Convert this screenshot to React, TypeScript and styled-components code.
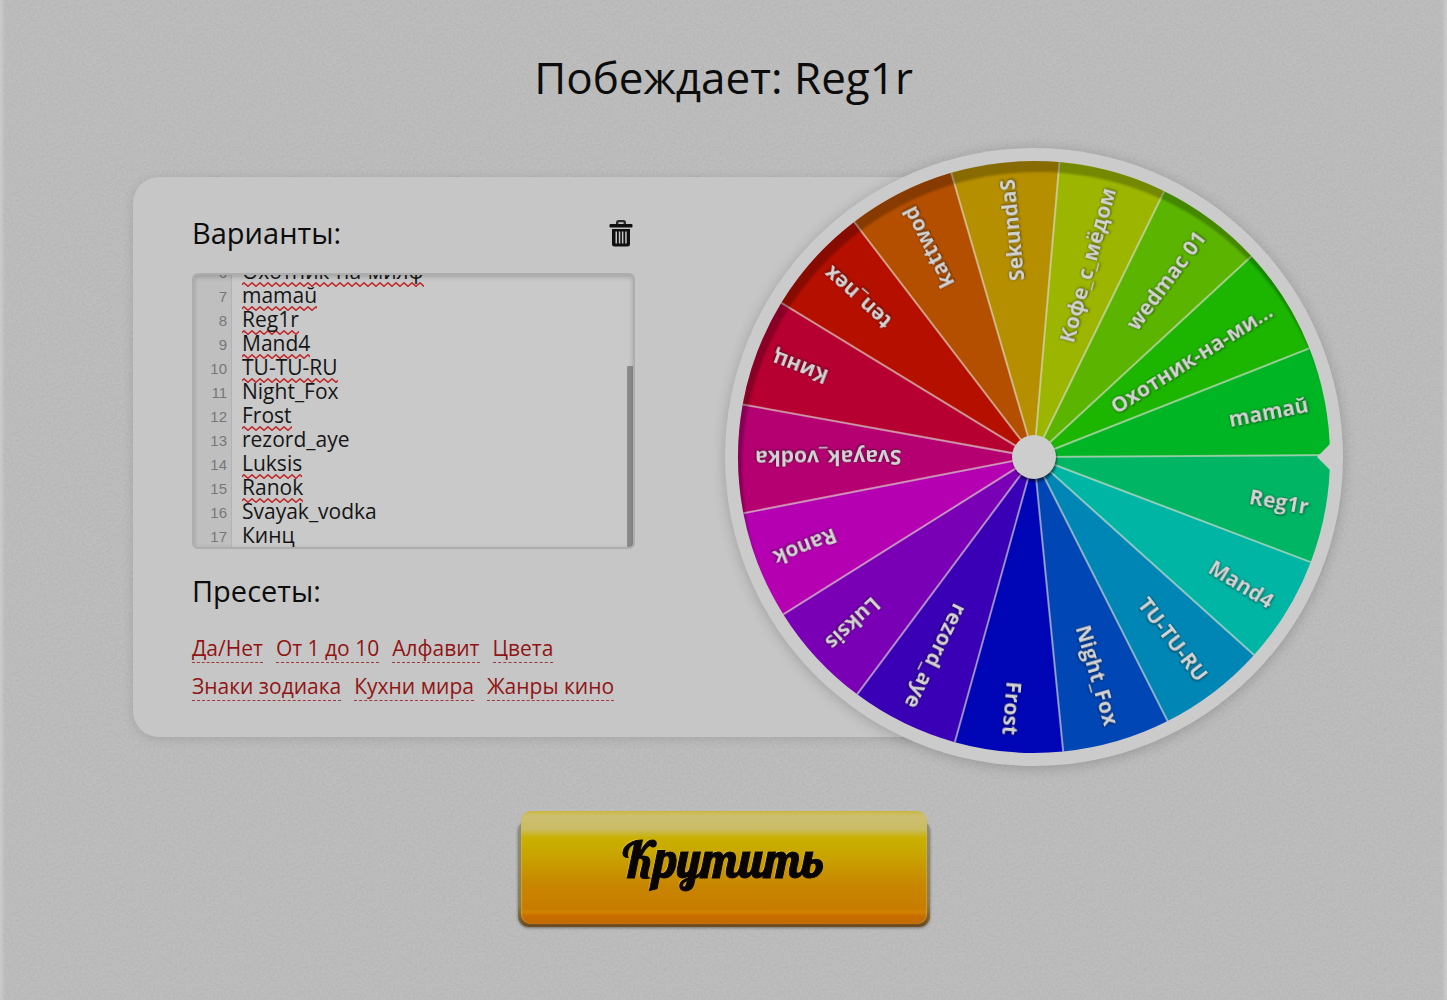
import React, { useLayoutEffect, useRef, useState } from "react";
import styled, { createGlobalStyle } from "styled-components";

const sans = `"Open Sans", "Noto Sans", sans-serif`;

const grain = encodeURIComponent(
  `<svg xmlns="http://www.w3.org/2000/svg" width="240" height="240"><filter id="n" x="0" y="0" width="100%" height="100%"><feTurbulence type="fractalNoise" baseFrequency="0.45" numOctaves="2" stitchTiles="stitch"/><feColorMatrix values="0 0 0 0 0  0 0 0 0 0  0 0 0 0 0  0.5 0.5 0 0 -0.38"/></filter><rect width="240" height="240" filter="url(#n)" opacity="0.12"/></svg>`
);

const wave = encodeURIComponent(
  `<svg xmlns="http://www.w3.org/2000/svg" width="8" height="5"><path d="M-2 4.300L2 0.800L6 4.300L10 0.800" fill="none" stroke="#c02c30" stroke-width="1.600"/></svg>`
);

const GlobalStyle = createGlobalStyle`
  *, *::before, *::after { box-sizing: border-box; }
  body {
    margin: 0;
    background: #bebebe url("data:image/svg+xml,${grain}");
    color: #0c0c0c;
    font-family: ${sans};
  }
`;

const Page = styled.main`
  display: flex;
  flex-direction: column;
  align-items: center;
  min-height: 100vh;
  padding: 45px 32px 73px;
  box-shadow: inset 5px 0 3px -2px #cacaca, inset -5px 0 3px -2px #cacaca;
`;

const Winner = styled.h1`
  margin: 0 0 39px;
  font-size: 44px;
  line-height: 64px;
  font-weight: 400;
`;

const Stage = styled.div`
  display: grid;
  grid-template-columns: 592px 309px 1fr;
  align-items: center;
  width: 100%;
  max-width: 1181px;
`;

const Panel = styled.section`
  grid-area: 1 / 1 / 2 / 3;
  padding: 36px 0 36px 59px;
  border-radius: 26px;
  background: #c6c6c6;
  box-shadow: 0 2px 12px rgba(0, 0, 0, 0.12);
`;

const PanelBody = styled.div`
  width: 443px;
`;

const HeadingRow = styled.div`
  display: flex;
  align-items: center;
  justify-content: space-between;
  margin-bottom: 20px;
`;

const Heading = styled.h2`
  margin: 0;
  font-size: 29px;
  line-height: 40px;
  font-weight: 400;
`;

const ClearButton = styled.button`
  display: flex;
  padding: 2px;
  border: 0;
  background: none;
  color: #101010;
  cursor: pointer;
`;

const EditorFrame = styled.div`
  position: relative;
  height: 276px;
  margin-bottom: 22px;
  border: 2px solid #adadad;
  border-radius: 6px;
  background: #c9c9c9;
  overflow: hidden;

  &::after {
    content: "";
    position: absolute;
    inset: 0;
    box-shadow: inset 0 2px 5px rgba(0, 0, 0, 0.2);
    pointer-events: none;
  }
`;

const EditorScroll = styled.div`
  display: flex;
  height: 100%;
  overflow-y: auto;
  scrollbar-width: none;
`;

const Gutter = styled.ol`
  flex: none;
  width: 38px;
  height: 408px;
  margin: 0;
  padding: 0 4px 0 0;
  border-right: 1px solid #b2b2b2;
  background: #bfbfbf;
  list-style: none;
  color: #777;
  font: 15px/24px "Liberation Sans", Arial, sans-serif;
  text-align: right;
  overflow: hidden;
`;

const EditorText = styled.div`
  display: grid;
  flex: 1;
  height: 408px;
  overflow: hidden;
`;

const Squiggles = styled.div`
  grid-area: 1 / 1;
  padding: 4px 0 0 10px;
`;

const Squiggle = styled.div<{ $on: boolean }>`
  height: 24px;
  background: ${(p) => (p.$on ? `url("data:image/svg+xml,${wave}") repeat-x 0 100%` : "none")};
`;

const EntriesField = styled.textarea`
  grid-area: 1 / 1;
  display: block;
  width: 100%;
  height: 408px;
  padding: 0 0 0 10px;
  border: 0;
  outline: 0;
  resize: none;
  overflow: hidden;
  background: transparent;
  color: #161616;
  font: 21px/24px ${sans};
  white-space: pre;
`;

const Thumb = styled.div`
  position: absolute;
  right: 0;
  bottom: 0;
  width: 6px;
  border-radius: 1px;
  background: #8c8c8c;
`;

const Presets = styled.nav`
  display: flex;
  flex-wrap: wrap;
  gap: 9px 13px;
  margin-top: 23px;
`;

const PresetLink = styled.a`
  border-bottom: 1px dashed #9c3a3a;
  color: #911414;
  font-size: 21px;
  line-height: 28px;
  text-decoration: none;
`;

const WheelBox = styled.div`
  grid-area: 1 / 2 / 2 / 4;
  width: 618px;
  height: 618px;
  margin-right: -29px;
  border-radius: 50%;
  background: #cbcbcb;
  box-shadow: 0 2px 14px rgba(0, 0, 0, 0.2);
`;

const WheelSvg = styled.svg`
  display: block;
  width: 100%;
  height: 100%;
`;

const SliceLabel = styled.text`
  fill: #d3d3d3;
  font: 700 21px ${sans};
  text-anchor: end;
  filter: drop-shadow(0 0 1px rgba(0, 0, 0, 0.5)) drop-shadow(1px 1px 1px rgba(0, 0, 0, 0.3));
`;

const SpinButton = styled.button`
  position: relative;
  width: 406px;
  height: 113px;
  margin-top: 45px;
  padding: 0 0 16px;
  border: 0;
  border-radius: 10px;
  background: linear-gradient(
    #ccb840 0,
    #cdbf72 5px,
    #cabd65 18px,
    #c9b000 27px,
    #c9a800 40px,
    #c88600 74px,
    #c87c00 98px,
    #d08400 101px,
    #c76c00 105px,
    #c26a00 100%
  );
  box-shadow: inset 1px 0 1px rgba(210, 190, 70, 0.5), inset -1px 0 1px rgba(210, 190, 70, 0.5);
  color: #080502;
  font: 400 50px/96px Lobster, "Liberation Serif", serif;
  text-shadow: -1px -1px 1px rgba(240, 220, 120, 0.6);
  -webkit-text-stroke: 1px #080502;
  cursor: pointer;

  &::before {
    content: "";
    position: absolute;
    z-index: -1;
    inset: 9px -3px -3px;
    border-radius: 11px;
    background: linear-gradient(#8d8d86, #8b7c55 80%, #6c4a1c);
    box-shadow: 0 1px 3px rgba(0, 0, 0, 0.4);
  }
`;

const ButtonLayer = styled.div`
  position: relative;
  z-index: 0;
`;

type Entry = { name: string; flagged: boolean };

const entries: Entry[] = [
  { name: "ten_nex", flagged: true },
  { name: "kattwod", flagged: true },
  { name: "SekundaS", flagged: true },
  { name: "Кофе_с_мёдом", flagged: false },
  { name: "wedmac 01", flagged: true },
  { name: "Охотник-на-милф", flagged: true },
  { name: "mamaŭ", flagged: true },
  { name: "Reg1r", flagged: true },
  { name: "Mand4", flagged: true },
  { name: "TU-TU-RU", flagged: true },
  { name: "Night_Fox", flagged: false },
  { name: "Frost", flagged: true },
  { name: "rezord_aye", flagged: false },
  { name: "Luksis", flagged: true },
  { name: "Ranok", flagged: true },
  { name: "Svayak_vodka", flagged: false },
  { name: "Кинц", flagged: false },
];

const LINE = 24;
const GUTTER_TOP = 2;

const presets = ["Да/Нет", "От 1 до 10", "Алфавит", "Цвета", "Знаки зодиака", "Кухни мира", "Жанры кино"];

const TrashIcon = () => (
  <svg width="24" height="28" viewBox="0 0 24 28" fill="currentColor" aria-hidden="true">
    <path d="M7 5V3.500Q7 1 9.500 1h5Q17 1 17 3.500V5h-2.400V3.200H9.400V5z" opacity="0.85" />
    <rect x="0.500" y="5" width="23" height="3.600" rx="1" />
    <path
      fillRule="evenodd"
      d="M3 10h18V25q0 2.500-2.500 2.500h-13Q3 27.500 3 25zM6.500 12.500v12H8v-12zM9.800 12.500v12h1.500v-12zM12.900 12.500v12h1.500v-12zM16.200 12.500v12h1.500v-12z"
    />
  </svg>
);

function Editor() {
  const scroller = useRef<HTMLDivElement>(null);
  const field = useRef<HTMLTextAreaElement>(null);
  const [widths, setWidths] = useState<number[]>([]);
  const [view, setView] = useState({ first: 0, height: 0, bottom: 0 });

  const syncView = () => {
    const el = scroller.current!;
    const scale = el.clientHeight / el.scrollHeight;
    setView({
      first: Math.floor(el.scrollTop / LINE),
      height: el.clientHeight * scale,
      bottom: (el.scrollHeight - el.clientHeight - el.scrollTop) * scale,
    });
  };

  useLayoutEffect(() => {
    const ctx = document.createElement("canvas").getContext("2d")!;
    const style = getComputedStyle(field.current!);
    ctx.font = `${style.fontSize} ${style.fontFamily}`;
    setWidths(entries.map((e) => ctx.measureText(e.name).width));
    scroller.current!.scrollTop = scroller.current!.scrollHeight;
    syncView();
  }, []);

  return (
    <EditorFrame>
      <EditorScroll ref={scroller} onScroll={syncView}>
        <Gutter style={{ paddingTop: view.first * LINE + GUTTER_TOP }}>
          {entries.slice(view.first).map((e, i) => (
            <li key={e.name}>{view.first + i + 1}</li>
          ))}
        </Gutter>
        <EditorText>
          <Squiggles aria-hidden="true">
            {entries.map((e, i) => (
              <Squiggle key={e.name} $on={e.flagged} style={{ width: widths[i] }} />
            ))}
          </Squiggles>
          <EntriesField
            id="entries"
            ref={field}
            spellCheck={false}
            defaultValue={entries.map((e) => e.name).join("\n")}
          />
        </EditorText>
      </EditorScroll>
      <Thumb style={{ height: view.height, bottom: view.bottom }} />
    </EditorFrame>
  );
}

const C = 309;
const R = 296;
const STEP = 360 / entries.length;
const START = -148.6;

const point = (deg: number, r: number) => {
  const a = (deg * Math.PI) / 180;
  return `${(C + r * Math.cos(a)).toFixed(2)} ${(C + r * Math.sin(a)).toFixed(2)}`;
};

const shorten = (name: string) => (name.length > 13 ? `${name.slice(0, 13)}...` : name);

function Wheel() {
  return (
    <WheelBox>
      <WheelSvg viewBox="0 0 618 618" role="img" aria-label="Колесо">
        <defs>
          <clipPath id="disc">
            <circle cx={C} cy={C} r={R} />
          </clipPath>
          <filter id="soft" x="-10%" y="-10%" width="120%" height="120%">
            <feGaussianBlur stdDeviation="1" />
          </filter>
        </defs>
        {entries.map((e, i) => {
          const a = START + i * STEP;
          return (
            <path
              key={e.name}
              d={`M${C} ${C}L${point(a, R)}A${R} ${R} 0 0 1 ${point(a + STEP, R)}Z`}
              fill={`hsl(${5 + i * STEP} 100% 35.500%)`}
            />
          );
        })}
        {entries.map((e, i) => (
          <path
            key={e.name}
            d={`M${C} ${C}L${point(START + i * STEP, R)}`}
            stroke="rgba(222,222,210,0.6)"
            strokeWidth="2"
          />
        ))}
        <g clipPath="url(#disc)">
          <circle
            cx={C + 4}
            cy={C + 11}
            r={R + 30}
            fill="none"
            stroke="rgba(0,0,0,0.25)"
            strokeWidth="60"
            filter="url(#soft)"
          />
        </g>
        {entries.map((e, i) => (
          <SliceLabel
            key={e.name}
            x={C + 279}
            y={C}
            dy="8"
            transform={`rotate(${START + (i + 0.5) * STEP} ${C} ${C})`}
          >
            {shorten(e.name)}
          </SliceLabel>
        ))}
        <path d="M592 309L607 294V324Z" fill="#cbcbcb" />
        <circle cx={C + 1} cy={C + 3} r="22" fill="rgba(0,0,0,0.5)" filter="url(#soft)" />
        <circle cx={C} cy={C} r="22" fill="#cdcdcd" />
      </WheelSvg>
    </WheelBox>
  );
}

export default function App() {
  return (
    <>
      <GlobalStyle />
      <Page>
        <Winner>Побеждает: Reg1r</Winner>
        <Stage>
          <Panel>
            <PanelBody>
              <HeadingRow>
                <Heading as="label" htmlFor="entries">
                  Варианты:
                </Heading>
                <ClearButton type="button" aria-label="Очистить">
                  <TrashIcon />
                </ClearButton>
              </HeadingRow>
              <Editor />
              <Heading>Пресеты:</Heading>
              <Presets>
                {presets.map((p) => (
                  <PresetLink key={p} href="#">
                    {p}
                  </PresetLink>
                ))}
              </Presets>
            </PanelBody>
          </Panel>
          <Wheel />
        </Stage>
        <ButtonLayer>
          <SpinButton type="button">Крутить</SpinButton>
        </ButtonLayer>
      </Page>
    </>
  );
}
